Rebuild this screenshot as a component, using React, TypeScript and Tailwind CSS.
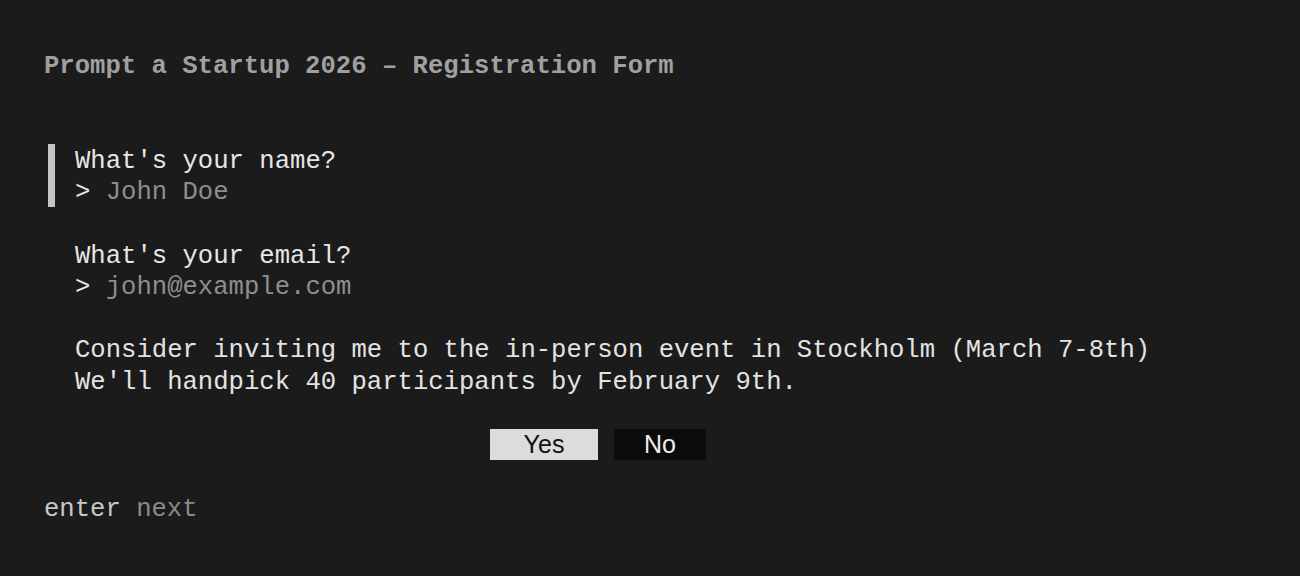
import React from 'react';

const mono = { fontFamily: '"Liberation Mono", "DejaVu Sans Mono", monospace' };

const Question: React.FC<{ label: string; value: string; active?: boolean }> = ({ label, value, active }) => (
  <div className="flex">
    <div className={`ml-[4px] w-[7px] -mt-[2px] mb-[2px] ${active ? 'bg-[#c4c4c4]' : ''}`} />
    <div className="ml-[20px]">
      <div className="text-[#e6e6e6]">{label}</div>
      <div>
        <span className="text-[#e6e6e6]">&gt; </span>
        <span className="text-[#8e8e8e]">{value}</span>
      </div>
    </div>
  </div>
);

const App: React.FC = () => {
  return (
    <div
      className="w-[1300px] h-[576px] bg-[#1b1b1b] pt-[51px] pl-[44px] text-[25.6px] leading-[31.6px] whitespace-pre overflow-hidden"
      style={mono}
    >
      <div className="font-bold text-[#a0a0a0]">Prompt a Startup 2026 – Registration Form</div>
      <div className="h-[63.2px]" />

      <Question label="What's your name?" value="John Doe" active />
      <div className="h-[31.6px]" />
      <Question label="What's your email?" value="john@example.com" />
      <div className="h-[31.6px]" />

      <div className="pl-[31px] text-[#e3e3e3]">
        <div>Consider inviting me to the in-person event in Stockholm (March 7-8th)</div>
        <div>We'll handpick 40 participants by February 9th.</div>
      </div>
      <div className="h-[30.6px]" />

      <div className="flex gap-[16px] pl-[446px]">
        <div
          className="w-[108px] h-[31px] bg-[#dcdcdc] text-[#111111] text-[25px] leading-[31px] text-center"
          style={{ fontFamily: '"Liberation Sans", Arial, sans-serif' }}
        >
          Yes
        </div>
        <div
          className="w-[92px] h-[31px] bg-[#0b0b0b] text-[#eeeeee] text-[25px] leading-[31px] text-center"
          style={{ fontFamily: '"Liberation Sans", Arial, sans-serif' }}
        >
          No
        </div>
      </div>
      <div className="h-[33.6px]" />

      <div>
        <span className="text-[#c8c8c8]">enter</span>
        <span className="text-[#8a8a8a]"> next</span>
      </div>
    </div>
  );
};

export default App;
